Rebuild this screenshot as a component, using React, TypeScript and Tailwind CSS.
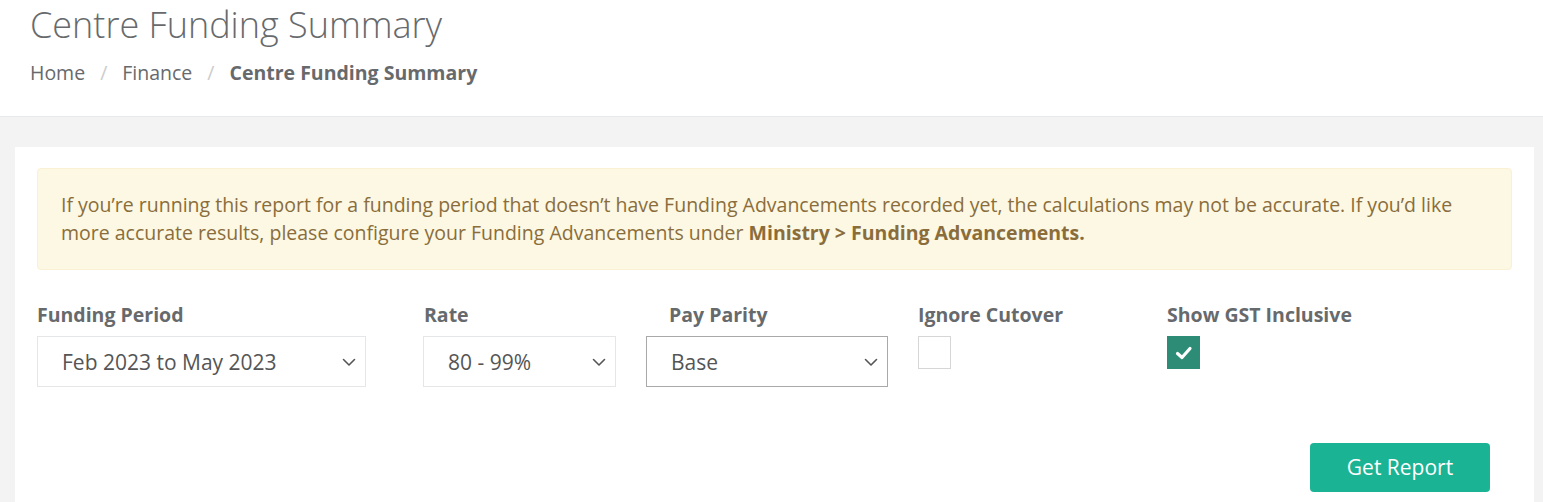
import React from "react";

const Chevron = () => (
  <svg width="14" height="14" viewBox="0 0 14 14" fill="none" className="absolute right-[9px] top-1/2 -translate-y-1/2">
    <path d="M1.5 4.5 L7 10 L12.5 4.5" stroke="#555" strokeWidth="1.6" strokeLinecap="round" strokeLinejoin="round" />
  </svg>
);

const Select = ({ value, width, dark }: { value: string; width: number; dark?: boolean }) => (
  <div
    className={`relative h-[51px] bg-white border ${dark ? "border-[#a9a9a9]" : "border-[#e5e6e7]"} flex items-center pl-[24px] pt-[2px] text-[21px] text-[#555]`}
    style={{ width }}
  >
    {value}
    <Chevron />
  </div>
);

export default function App() {
  return (
    <div className="w-[1543px] h-[502px] overflow-hidden bg-[#f3f3f4] text-[#676a6c]" style={{ fontFamily: '"Open Sans", sans-serif' }}>
      <div className="h-[117px] bg-white border-b border-[#e7eaec] pl-[30px] pt-[2px]">
        <h1 className="text-[36px] font-light leading-[46px] text-[#676a6c]">Centre Funding Summary</h1>
        <div className="mt-[12px] flex items-center text-[19.5px] leading-[26px]">
          <span>Home</span>
          <span className="mx-[15px] text-[#ccc]">/</span>
          <span>Finance</span>
          <span className="mx-[15px] text-[#ccc]">/</span>
          <span className="font-bold">Centre Funding Summary</span>
        </div>
      </div>
      <div className="pt-[30px] pl-[15px] pr-[9px]">
        <div className="bg-white px-[22px] pt-[21px] pb-[20px]">
          <div className="border border-[#faf0d3] bg-[#fcf8e3] rounded-[4px] px-[23px] py-[22px] text-[19.5px] leading-[28px] text-[#8a6d3b]">
            If you’re running this report for a funding period that doesn’t have Funding Advancements recorded yet, the calculations may not be accurate. If you’d like more accurate results, please configure your Funding Advancements under <b className="font-bold">Ministry &gt; Funding Advancements.</b>
          </div>
          <div className="flex mt-[32px]">
            <div className="w-[386px]">
              <div className="text-[19.5px] font-bold leading-[25px] mb-[9px]">Funding Period</div>
              <Select value="Feb 2023 to May 2023" width={329} />
            </div>
            <div className="w-[223px]">
              <div className="text-[19.5px] font-bold leading-[25px] mb-[9px] pl-[1px]">Rate</div>
              <Select value="80 - 99%" width={193} />
            </div>
            <div className="w-[272px]">
              <div className="text-[19.5px] font-bold leading-[25px] mb-[9px] pl-[23px]">Pay Parity</div>
              <Select value="Base" width={242} dark />
            </div>
            <div className="w-[249px]">
              <div className="text-[19.5px] font-bold leading-[25px] mb-[9px]">Ignore Cutover</div>
              <div className="w-[33px] h-[33px] border border-[#d6d6d6] bg-white" />
            </div>
            <div>
              <div className="text-[19.5px] font-bold leading-[25px] mb-[9px]">Show GST Inclusive</div>
              <div className="w-[33px] h-[33px] bg-[#2c8c76] flex items-center justify-center">
                <svg width="20" height="20" viewBox="0 0 20 20" fill="none">
                  <path d="M3.5 10.5 L8 14.5 L16 5.5" stroke="white" strokeWidth="3.2" strokeLinecap="round" strokeLinejoin="round" />
                </svg>
              </div>
            </div>
          </div>
          <div className="flex justify-end mt-[56px] pr-[22px]">
            <button className="w-[180px] h-[49px] bg-[#1ab394] text-white text-[21px] rounded-[4px]">Get Report</button>
          </div>
        </div>
      </div>
    </div>
  );
}
